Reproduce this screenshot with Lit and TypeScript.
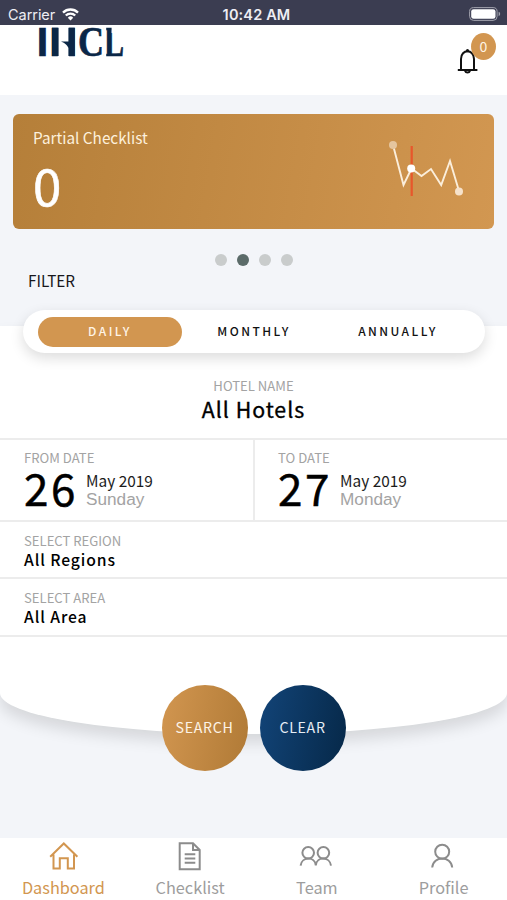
import { LitElement, html, css, svg } from "lit";
import { customElement, property } from "lit/decorators.js";
import { classMap } from "lit/directives/class-map.js";

const homeIcon = svg`<path d="M1.2 14.8 14.8 1.5 28.4 14.8 M4.5 12.5V26.5H10.8V16.2H18.8V26.5H25V12.5"/>`;
const listIcon = svg`<path d="M3.7 1.3H17L23.7 8V27.3H3.7Z M17 1.3V8H23.7 M8.7 12.2H19.3 M8.7 16.5H19.3 M8.7 20.8H19.3"/>`;
const teamIcon = svg`<circle cx="6.2" cy="10.8" r="5.8"/><circle cx="21.4" cy="10.8" r="5.8"/><path d="M-1.4 23.7C-.4 14.3 13 14.3 13.8 23.3 14.6 14.3 28 14.3 29 23.7"/>`;
const profileIcon = svg`<circle cx="13.2" cy="9.7" r="7"/><path d="M3.2 25.5C4.2 13.5 22.2 13.5 23.2 25.5"/>`;

@customElement("status-bar")
class StatusBar extends LitElement {
  static styles = css`
    :host { display: grid; grid-template-columns: 1fr auto 1fr; align-items: center; height: 25px; flex: none;
      background: #3b3d51; color: #eeeef4; font: 14.5px/25px Inter, sans-serif; }
    .left { display: flex; align-items: center; gap: 7px; padding: 2px 0 0 8px; letter-spacing: -0.05px; }
    .time { font-weight: 600; padding: 2px 0 0 6px; letter-spacing: 0.15px; }
    .right { display: flex; justify-content: flex-end; padding: 1px 6px 0 0; }
    svg { display: block; }
  `;
  render() {
    return html`
      <div class="left"><span>Carrier</span>
        <svg width="17" height="13" viewBox="0 0 17 13" fill="none" stroke="#fff" stroke-width="2.3">
          <path d="M1 4.6A10.6 10.6 0 0 1 16 4.6M3.8 7.5A6.6 6.6 0 0 1 13.2 7.5"/>
          <path d="M8.5 12.6 5.8 9.7A3.8 3.8 0 0 1 11.2 9.7Z" fill="#fff" stroke="none"/>
        </svg>
      </div>
      <div class="time">10:42 AM</div>
      <div class="right">
        <svg width="32" height="14" viewBox="0 0 32 14">
          <rect x=".6" y=".6" width="27.5" height="12.8" rx="4" fill="none" stroke="#a2a3ae" stroke-width="1"/>
          <rect x="2.2" y="2.2" width="24.3" height="9.6" rx="2.4" fill="#fff"/>
          <path d="M29.6 4.8Q31.2 5.4 31.2 7T29.6 9.2Z" fill="#a2a3ae"/>
        </svg>
      </div>`;
  }
}

@customElement("app-header")
class AppHeader extends LitElement {
  static styles = css`
    :host { display: flex; justify-content: space-between; height: 70px; flex: none; background: #fff; }
    .logo { display: block; margin: 2px 0 0 36px; overflow: visible; }
    .logo text { fill: #0b2747; stroke: #0b2747; stroke-width: 0.7px; }
    .sans { font-family: "Liberation Sans", sans-serif; font-weight: 700; }
    .serif { font-family: "Liberation Serif", serif; font-weight: 700; }
    .bell { position: relative; display: flex; width: 39px; margin-right: 11px; height: 52px; align-items: flex-end; }
    .bell svg { display: block; margin-bottom: 1px; }
    .badge { position: absolute; right: 0; top: 8px; width: 25px; height: 27px; border-radius: 50%;
      background: #d29650; color: #fff4e4; font: 14px/26px "Noto Sans CJK SC", sans-serif; text-align: center; }
  `;
  render() {
    return html`
      <svg class="logo" width="90" height="32" viewBox="0 0 90 32">
        <text class="sans" y="29" font-size="41" x="0.8">I</text>
        <text class="sans" y="29" font-size="41" textLength="27.5" lengthAdjust="spacingAndGlyphs" x="13.6">H</text>
        <text class="serif" y="29" font-size="42" textLength="26" lengthAdjust="spacingAndGlyphs" x="42">C</text>
        <text class="serif" y="29" font-size="43" textLength="20" lengthAdjust="spacingAndGlyphs" x="68">L</text>
        <path d="M22 0H33V30H22Z M67.8 0H70.2V30H67.8Z M75.6 0H82V6H75.6Z" fill="#fff"/>
        <path d="M16 .8H22.6V29H16Z M32.4 .8H38.8V29H32.4Z M25 14.5H33V22Q31 16.5 25 14.5Z" fill="#0b2747"/>
      </svg>
      <div class="bell">
        <svg width="22" height="28" viewBox="0 0 22 28" fill="none" stroke="#111" stroke-width="2">
          <path d="M4 21.5V11C4 .8 17 .8 17 11V21.5"/>
          <path d="M.8 22H20.4"/>
          <path d="M8 22.8A2.7 2.7 0 0 0 13 22.8"/>
          <circle cx="10.5" cy="2.7" r="1.6" fill="#111" stroke="none"/>
        </svg>
        <span class="badge">0</span>
      </div>`;
  }
}

@customElement("summary-card")
class SummaryCard extends LitElement {
  static styles = css`
    :host { display: flex; flex: none; justify-content: space-between; box-sizing: border-box; height: 115px; margin: 19px 13px 0;
      padding: 13px 30px 0 20px; border-radius: 6px; background: linear-gradient(100deg, #b57f39, #d29751);
      color: #fff; }
    .title { font-size: 15.3px; line-height: 20px; color: #fdf0dc; }
    .value { font-size: 51px; line-height: 74px; -webkit-text-stroke: 0.6px #fff; }
    svg { display: block; margin-top: 12px; }
  `;
  render() {
    return html`
      <div><div class="title">Partial Checklist</div><div class="value">0</div></div>
      <svg width="77" height="62" viewBox="0 0 77 62" fill="none">
        <path d="M24.7 7V57" stroke="#e8572b" stroke-width="2.2"/>
        <path d="M6 6 16.5 46 24.5 29.5 34.5 37 44 30 54.2 46 63 22 72 52" stroke="#fbeedb" stroke-width="1.9"/>
        <circle cx="6" cy="6" r="4" fill="#e5c59e"/>
        <circle cx="24.2" cy="29.5" r="4" fill="#fff"/>
        <circle cx="72" cy="52.5" r="4" fill="#f6e2cb"/>
      </svg>`;
  }
}

@customElement("period-switch")
class PeriodSwitch extends LitElement {
  static styles = css`
    :host { display: grid; flex: none; grid-template-columns: repeat(3, 144px); justify-content: center; align-items: center;
      height: 43px; margin: 0 22px 0 23px; border-radius: 22px; background: #fff;
      box-shadow: 0 5px 14px rgba(0, 0, 0, 0.14); }
    .item { height: 30px; border-radius: 15px; text-align: center; font-size: 12px; line-height: 28px;
      font-weight: 500; letter-spacing: 2.45px; color: #111; }
    .active { background: #d29650; color: #fff4e6; }
  `;
  render() {
    return html`${["DAILY", "MONTHLY", "ANNUALLY"].map((t, i) =>
      html`<div class=${classMap({ item: true, active: i === 0 })}>${t}</div>`)}`;
  }
}

@customElement("date-field")
class DateField extends LitElement {
  @property() label = "";
  @property() day = "";
  @property() month = "";
  @property() weekday = "";
  static styles = css`
    :host { display: block; box-sizing: border-box; padding: 9px 0 0 24px; }
    .label { font-size: 13.1px; line-height: 18px; color: #a3a3a3; }
    .row { display: flex; gap: 9px; }
    .day { width: 53px; font-size: 44px; line-height: 41px; letter-spacing: 2.6px; -webkit-text-stroke: 0.5px #000; }
    .month { font-size: 15.4px; line-height: 18px; padding-top: 4px; color: #1b1b1b; white-space: nowrap; }
    .weekday { font: 17.2px/20px "Liberation Sans", sans-serif; color: #a3a3a3; }
  `;
  render() {
    return html`
      <div class="label">${this.label}</div>
      <div class="row">
        <div class="day">${this.day}</div>
        <div><div class="month">${this.month}</div><div class="weekday">${this.weekday}</div></div>
      </div>`;
  }
}

@customElement("tab-bar")
class TabBar extends LitElement {
  static styles = css`
    :host { display: grid; flex: none; grid-template-columns: repeat(4, 1fr); height: 62px; background: #fff; }
    .tab { display: flex; flex-direction: column; align-items: center; color: #9d9d9d; font-size: 16.3px; line-height: 24px; }
    .tab svg { display: block; margin: 4px 0 4px; overflow: visible; fill: none; stroke: #8c8c8c; stroke-width: 2; }
    .active { color: #d29650; }
    .active svg { stroke: #d29650; }
  `;
  render() {
    const tabs = [
      { name: "Dashboard", icon: homeIcon },
      { name: "Checklist", icon: listIcon },
      { name: "Team", icon: teamIcon },
      { name: "Profile", icon: profileIcon },
    ];
    return html`${tabs.map((t, i) => html`
      <div class=${classMap({ tab: true, active: i === 0 })}>
        <svg width="29" height="29" viewBox="0 0 29 29">${t.icon}</svg>
        <span>${t.name}</span>
      </div>`)}`;
  }
}

@customElement("app-root")
class AppRoot extends LitElement {
  static styles = css`
    :host { display: flex; flex-direction: column; height: 900px; overflow: hidden; background: #f3f5f9; color: #000;
      font-family: "Noto Sans CJK SC", sans-serif; }
    .dots { display: flex; flex: none; justify-content: center; gap: 10px; margin-top: 25px; }
    .dot { width: 12px; height: 12px; border-radius: 50%; background: #c9cccc; }
    .on { background: #5b6b69; }
    .filter { flex: none; margin: 4px 0 0 28px; font-size: 15.3px; line-height: 20px; color: #17171c; }
    .panel { display: flex; flex: none; flex-direction: column; height: 408px; margin-top: 36px; background: #fff;
      border-radius: 0 0 50% 50% / 0 0 41px 41px; box-shadow: 0 9px 15px rgba(0, 0, 0, 0.12); }
    .panel > * { flex: none; }
    period-switch { margin-top: -16px; }
    .label { font-size: 13.1px; line-height: 18px; color: #a3a3a3; }
    .hotel { height: 85px; box-sizing: border-box; padding-top: 24px; text-align: center; }
    .hotel-name { font-size: 21.3px; line-height: 27px; letter-spacing: 1px; -webkit-text-stroke: 0.35px #000; }
    .dates { display: grid; grid-template-columns: 253px 1fr; height: 83.5px; border: solid #ececec; border-width: 2px 0; box-sizing: border-box; }
    date-field + date-field { border-left: 2px solid #ececec; padding-left: 23px; }
    .field { height: 57.5px; box-sizing: border-box; padding: 10px 0 0 24px; border-bottom: 2px solid #ececec; }
    .value { font-size: 15.7px; line-height: 20px; letter-spacing: 0.9px; font-weight: 500; }
    .actions { display: flex; justify-content: center; gap: 12px; margin-top: 48px; }
    .round { width: 86px; height: 86px; flex: none; border-radius: 50%; text-align: center; font-size: 14.2px; line-height: 84px;
      letter-spacing: 0.7px; color: #fdf3e6; }
    .search { background: linear-gradient(100deg, #d29650, #b07a36); }
    .clear { background: linear-gradient(100deg, #124478, #062848); color: #e6edf5; }
    tab-bar { margin-top: auto; }
  `;
  render() {
    return html`
      <status-bar></status-bar>
      <app-header></app-header>
      <summary-card></summary-card>
      <div class="dots">${[0, 1, 2, 3].map((i) => html`<span class=${classMap({ dot: true, on: i === 1 })}></span>`)}</div>
      <div class="filter">FILTER</div>
      <div class="panel">
        <period-switch></period-switch>
        <div class="hotel"><div class="label">HOTEL NAME</div><div class="hotel-name">All Hotels</div></div>
        <div class="dates">
          <date-field label="FROM DATE" day="26" month="May 2019" weekday="Sunday"></date-field>
          <date-field label="TO DATE" day="27" month="May 2019" weekday="Monday"></date-field>
        </div>
        <div class="field"><div class="label">SELECT REGION</div><div class="value">All Regions</div></div>
        <div class="field"><div class="label">SELECT AREA</div><div class="value">All Area</div></div>
        <div class="actions">
          <div class="round search">SEARCH</div>
          <div class="round clear">CLEAR</div>
        </div>
      </div>
      <tab-bar></tab-bar>`;
  }
}
